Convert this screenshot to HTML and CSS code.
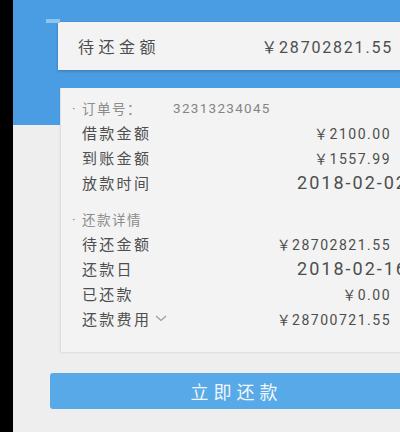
FILE: index.html
```html
<!DOCTYPE html>
<html lang="zh-CN">
<head>
  <meta charset="UTF-8">
  <title>还款详情</title>
  <meta name="viewport" content="width=device-width, initial-scale=1.0">
  <link rel="stylesheet" href="styles.css">
</head>
<body>

<div class="screen">
  <div class="summary">
    <span class="summary-label">待还金额</span>
    <span class="summary-amount">￥28702821.55</span>
  </div>

  <div class="detail">
    <div class="section">
      <span class="dot">·</span>
      <span class="section-label">订单号：</span>
      <span class="order-no">32313234045</span>
    </div>
    <div class="row"><span class="label">借款金额</span><span class="value">￥2100.00</span></div>
    <div class="row"><span class="label">到账金额</span><span class="value">￥1557.99</span></div>
    <div class="row"><span class="label">放款时间</span><span class="value date">2018-02-02</span></div>

    <div class="section section-gap">
      <span class="dot">·</span>
      <span class="section-label">还款详情</span>
    </div>
    <div class="row"><span class="label">待还金额</span><span class="value">￥28702821.55</span></div>
    <div class="row"><span class="label">还款日</span><span class="value date">2018-02-16</span></div>
    <div class="row"><span class="label">已还款</span><span class="value">￥0.00</span></div>
    <div class="row">
      <span class="label">还款费用
        <svg class="chevron" width="12" height="7" viewBox="0 0 12 7"><path d="M1 1 L6 5.5 L11 1" fill="none" stroke="#9a9a9a" stroke-width="1.1"/></svg>
      </span>
      <span class="value">￥28700721.55</span>
    </div>
  </div>

  <button class="pay">立即还款</button>
</div>

</body>
</html>
```

FILE: styles.css
```css
html, body {
  margin: 0;
  height: 100%;
  overflow: hidden;
  background: #000;
}
body {
  font-family: Roboto, "Noto Sans CJK SC", sans-serif;
  color: #4e4e4e;
}
.screen {
  box-sizing: border-box;
  margin-left: 13px;
  width: 400px;
  height: 432px;
  padding: 22px 0 0 37px;
  background: linear-gradient(#4b9de3 0, #4b9de3 125px, #eeeeee 125px);
}
.summary {
  position: relative;
  margin-left: 8px;
  height: 48px;
  padding: 0 20px 0 20px;
  display: flex;
  align-items: center;
  justify-content: space-between;
  background: #f3f3f3;
  box-shadow: 0 1px 3px rgba(0,0,0,0.25);
}
.summary::before {
  content: "";
  position: absolute;
  left: -12px;
  top: -3px;
  width: 14px;
  height: 4px;
  background: #8ec5ef;
}
.summary-label {
  font-size: 16px;
  letter-spacing: 4.5px;
}
.summary-amount {
  font-size: 16px;
  letter-spacing: 1.8px;
}
.detail {
  margin: 18px 0 0 10px;
  padding: 7px 22px 21px 21px;
  background: #f3f3f3;
  border-left: 1px solid #dbe1e8;
  box-shadow: 0 1px 2px rgba(0,0,0,0.08);
}
.section {
  height: 25px;
  display: flex;
  align-items: center;
  font-size: 13.5px;
  color: #8c8c8c;
  letter-spacing: 1.5px;
}
.section-gap {
  margin-top: 11px;
}
.dot {
  width: 10px;
  margin-left: -10px;
}
.section-label {
  width: 91px;
}
.order-no {
  font-size: 13.5px;
  letter-spacing: 1.3px;
  color: #858585;
}
.row {
  height: 25px;
  display: flex;
  align-items: center;
  justify-content: space-between;
}
.label {
  font-size: 15px;
  letter-spacing: 2.3px;
  display: flex;
  align-items: center;
}
.chevron {
  margin-left: 4px;
}
.value {
  font-size: 14px;
  letter-spacing: 1.5px;
}
.date {
  font-size: 18px;
  letter-spacing: 2px;
  margin-right: -17px;
}
.pay {
  display: block;
  width: 100%;
  height: 36px;
  margin-top: 21px;
  padding: 0 0 0 10px;
  border: none;
  border-radius: 3px;
  background: #57a9e7;
  color: #f0f7fd;
  font-family: inherit;
  font-size: 18px;
  letter-spacing: 5px;
}
```
